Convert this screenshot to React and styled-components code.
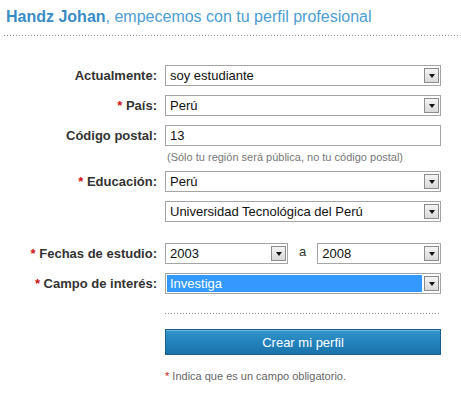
import styled, { createGlobalStyle } from "styled-components";

const GlobalStyle = createGlobalStyle`
  html, body {
    margin: 0;
    padding: 0;
    background: #ffffff;
  }
  body {
    font-family: "Liberation Sans", Arial, sans-serif;
  }
`;

const Page = styled.div`
  width: 461px;
  height: 393px;
  overflow: hidden;
  padding-top: 7px;
  box-sizing: border-box;
`;

const Title = styled.h1`
  margin: 0 0 0 6px;
  font-size: 16px;
  font-weight: normal;
  line-height: 20px;
  color: #4d9dd2;

  strong {
    color: #3a8cc6;
  }
`;

// dots every 3px, like the old gif separators
const Divider = styled.div`
  margin: ${(p) => p.$margin};
  height: 1px;
  background-image: linear-gradient(to right, #8a8a8a 1px, transparent 1px);
  background-size: 3px 1px;
  background-repeat: repeat-x;
`;

const Form = styled.div`
  display: grid;
  grid-template-columns: 157px 276px;
  column-gap: 8px;
  row-gap: 9px;
  margin-top: 29px;
`;

const Label = styled.div`
  font-size: 13px;
  font-weight: bold;
  color: #333333;
  text-align: right;
  line-height: 21px;
  grid-column: 1;
  margin-top: ${(p) => p.$top || 0}px;

  span {
    color: #cc1111;
  }
`;

const Field = styled.div`
  grid-column: 2;
  display: flex;
  align-items: center;
  gap: 11px;
  margin-top: ${(p) => p.$top || 0}px;
`;

const Select = styled.div`
  flex: ${(p) => (p.$width ? "none" : "1")};
  width: ${(p) => (p.$width ? `${p.$width}px` : "auto")};
  height: 21px;
  box-sizing: border-box;
  border: 1px solid #a5a5a5;
  background: #ffffff;
  display: flex;
  align-items: center;
  padding: 1px;
`;

const Value = styled.div`
  flex: 1;
  height: 100%;
  padding-left: 3px;
  font-size: 13px;
  line-height: 17px;
  color: ${(p) => (p.$selected ? "#ffffff" : "#111111")};
  background: ${(p) => (p.$selected ? "#3399ff" : "transparent")};
  white-space: nowrap;
  overflow: hidden;
`;

const Arrow = styled.div`
  width: 15px;
  height: 15px;
  margin-left: 2px;
  box-sizing: border-box;
  border: 1px solid #8c8c8c;
  background: linear-gradient(#f4f4f4, #d8d8d8);
  display: flex;
  align-items: center;
  justify-content: center;

  &::after {
    content: "";
    border-left: 3.5px solid transparent;
    border-right: 3.5px solid transparent;
    border-top: 4px solid #111111;
    margin-top: 1px;
  }
`;

const Input = styled.div`
  flex: 1;
  height: 21px;
  box-sizing: border-box;
  border: 1px solid #a5a5a5;
  padding-left: 4px;
  font-size: 13px;
  line-height: 19px;
  color: #111111;
`;

const Hint = styled.div`
  grid-column: 2;
  margin: -4px 0 -2px 2px;
  font-size: 11px;
  line-height: 13px;
  color: #777777;
`;

const Between = styled.span`
  font-size: 13px;
  color: #333333;
  padding-bottom: 4px;
`;

const Actions = styled.div`
  margin-left: 165px;
  width: 276px;
`;

const Button = styled.button`
  display: block;
  width: 276px;
  height: 26px;
  padding: 0;
  border: 1px solid #1d5f8c;
  background: linear-gradient(#3596cc 0%, #2485be 45%, #1b73ab 100%);
  box-shadow: inset 0 1px 0 #6db6df;
  color: #ffffff;
  font-family: "Liberation Sans", Arial, sans-serif;
  font-size: 13px;
  cursor: pointer;
`;

const Note = styled.p`
  margin: 15px 0 0;
  font-size: 11px;
  color: #666666;

  span {
    color: #cc1111;
  }
`;

function Dropdown({ value, width, selected }) {
  return (
    <Select $width={width}>
      <Value $selected={selected}>{value}</Value>
      <Arrow />
    </Select>
  );
}

export default function App() {
  return (
    <Page>
      <GlobalStyle />
      <Title>
        <strong>Handz Johan</strong>, empecemos con tu perfil profesional
      </Title>
      <Divider $margin="8px 2px 0 4px" />

      <Form>
        <Label>Actualmente:</Label>
        <Field>
          <Dropdown value="soy estudiante" />
        </Field>

        <Label>
          <span>*</span> País:
        </Label>
        <Field>
          <Dropdown value="Perú" />
        </Field>

        <Label>Código postal:</Label>
        <Field>
          <Input>13</Input>
        </Field>
        <Hint>(Sólo tu región será pública, no tu código postal)</Hint>

        <Label>
          <span>*</span> Educación:
        </Label>
        <Field>
          <Dropdown value="Perú" />
        </Field>

        <Field>
          <Dropdown value="Universidad Tecnológica del Perú" />
        </Field>

        <Label $top={12}>
          <span>*</span> Fechas de estudio:
        </Label>
        <Field $top={12}>
          <Dropdown value="2003" width={123} />
          <Between>a</Between>
          <Dropdown value="2008" />
        </Field>

        <Label>
          <span>*</span> Campo de interés:
        </Label>
        <Field>
          <Dropdown value="Investiga" selected />
        </Field>
      </Form>

      <Actions>
        <Divider $margin="19px 0 15px" />
        <Button>Crear mi perfil</Button>
        <Note>
          <span>*</span> Indica que es un campo obligatorio.
        </Note>
      </Actions>
    </Page>
  );
}
